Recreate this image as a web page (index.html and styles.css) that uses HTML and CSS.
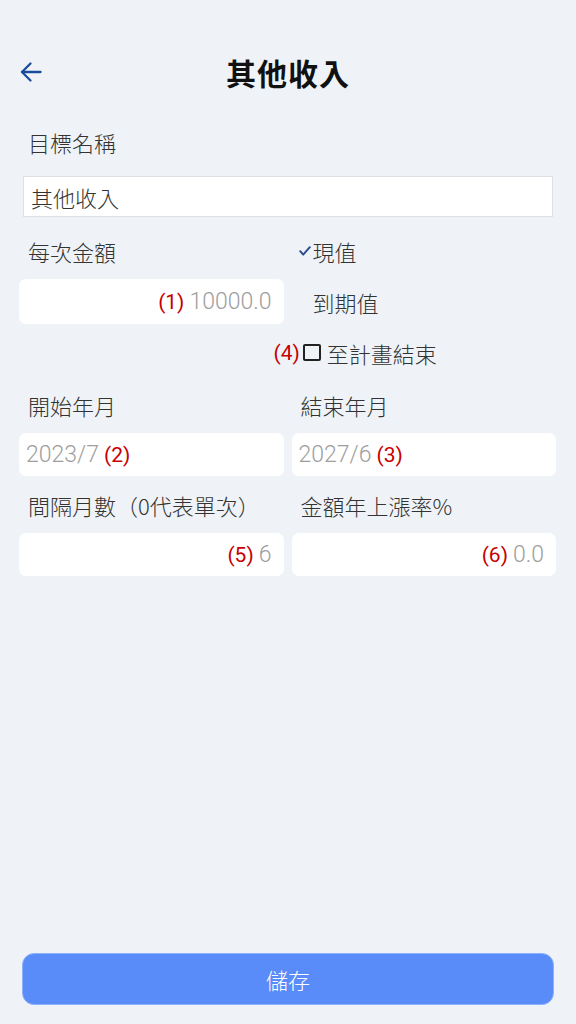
FILE: index.html
```html
<!DOCTYPE html>
<html lang="zh-TW">

<head>
  <meta charset="UTF-8">
  <title>其他收入</title>
  <meta name="viewport" content="width=device-width, initial-scale=1.0">
  <link rel="stylesheet" href="styles.css">
</head>

<body>
  <div class="page">
    <header class="top-bar">
      <button class="back-btn" aria-label="返回">
        <svg width="22" height="22" viewBox="0 0 22 22" fill="none" stroke="#1d4b9b" stroke-width="2.3" stroke-linecap="round" stroke-linejoin="round">
          <path d="M20.5 11H2" />
          <path d="M10.5 2.5L2 11l8.5 8.5" />
        </svg>
      </button>
      <h1>其他收入</h1>
      <span></span>
    </header>

    <!-- Goal name -->
    <section class="name-field">
      <div class="label">目標名稱</div>
      <div class="name-input">其他收入</div>
    </section>

    <!-- Amount + value type -->
    <section class="grid amount-row">
      <div class="field">
        <div class="label">每次金額</div>
        <div class="input right tall"><span class="note">(1)</span><span class="value">10000.0</span></div>
      </div>
      <div class="options">
        <div class="option">
          <span class="marker">
            <svg width="12" height="10" viewBox="0 0 12 10" fill="none" stroke="#2a4d8f" stroke-width="2" stroke-linecap="round" stroke-linejoin="round">
              <path d="M1.2 5.2l3 3.4L10.8 1.2" />
            </svg>
          </span>
          現值
        </div>
        <div class="option"><span class="marker"></span>到期值</div>
        <div class="option">
          <span class="note">(4)</span>
          <span class="checkbox"></span>
          <span class="option-text">至計畫結束</span>
        </div>
      </div>
    </section>

    <!-- Dates -->
    <section class="grid date-row">
      <div class="field">
        <div class="label">開始年月</div>
        <div class="input"><span class="value">2023/7</span><span class="note">(2)</span></div>
      </div>
      <div class="field">
        <div class="label">結束年月</div>
        <div class="input"><span class="value">2027/6</span><span class="note">(3)</span></div>
      </div>
    </section>

    <!-- Interval + growth -->
    <section class="grid interval-row">
      <div class="field">
        <div class="label">間隔月數（0代表單次）</div>
        <div class="input right"><span class="note">(5)</span><span class="value">6</span></div>
      </div>
      <div class="field">
        <div class="label">金額年上漲率%</div>
        <div class="input right"><span class="note">(6)</span><span class="value">0.0</span></div>
      </div>
    </section>

    <button class="save-btn">儲存</button>
  </div>
</body>

</html>
```

FILE: styles.css
```css
/* General Styles */
body {
  margin: 0;
  background-color: #eff3f7;
  font-family: Roboto, 'Noto Sans CJK TC', 'Noto Sans', sans-serif;
  font-weight: 300;
  color: #333;
  text-spacing-trim: space-all;
}

.page {
  min-height: 1024px;
  display: flex;
  flex-direction: column;
  box-sizing: border-box;
}

/* Header */
.top-bar {
  display: grid;
  grid-template-columns: 1fr auto 1fr;
  align-items: center;
  height: 48px;
  margin-top: 48px;
  padding: 0 20px;
}

.back-btn {
  background: none;
  border: none;
  padding: 0;
  width: 22px;
  height: 22px;
  display: flex;
  cursor: pointer;
}

.top-bar h1 {
  margin: 0;
  font-size: 30px;
  font-weight: 700;
  color: #111;
  letter-spacing: 1px;
}

/* Labels + inputs */
.label {
  height: 52px;
  box-sizing: border-box;
  padding: 0 0 4px 9px;
  display: flex;
  align-items: center;
  font-family: 'Noto Sans CJK TC', sans-serif;
  font-size: 22px;
  color: #333;
  white-space: nowrap;
}

.name-field {
  margin-top: 22px;
  padding: 0 23px 0 19px;
}

.name-field .label {
  margin-bottom: 6px;
}

.name-input {
  margin-left: 4px;
  height: 41px;
  box-sizing: border-box;
  border: 1px solid #dcdfe3;
  background: #ffffff;
  display: flex;
  align-items: center;
  padding-left: 7px;
  font-size: 22px;
  color: #333;
}

.grid {
  display: grid;
  grid-template-columns: 1fr 1fr;
  gap: 8px;
  padding: 0 20px 0 19px;
}

.amount-row {
  margin-top: 10px;
}

.date-row {
  margin-top: 3px;
}

.interval-row {
  margin-top: 5px;
}

.input {
  height: 43px;
  background: #ffffff;
  border-radius: 7px;
  display: flex;
  align-items: center;
  gap: 5px;
  padding: 0 12px 0 7px;
  font-size: 21px;
}

.input.tall {
  height: 45px;
}

.input.right {
  justify-content: flex-end;
}

.value {
  color: #9e9e9e;
  font-size: 23px;
}

.note {
  color: #c80000;
  font-weight: 400;
}

/* Value type options */
.options {
  margin: -2px 0 0 -18px;
  display: flex;
  flex-direction: column;
}

.option {
  height: 51px;
  display: flex;
  align-items: center;
  font-size: 22px;
  color: #333;
}

.option .note {
  font-size: 21px;
}

.marker {
  width: 39px;
  display: flex;
  justify-content: flex-end;
  padding-right: 2px;
  box-sizing: border-box;
}

.checkbox {
  width: 18px;
  height: 17px;
  box-sizing: border-box;
  border: 2.5px solid #222;
  border-radius: 2px;
  margin-left: 3px;
}

.option-text {
  margin-left: 6px;
}

/* Save button */
.save-btn {
  margin: auto 22px 19px;
  height: 52px;
  border: 1px solid #8fb0fb;
  border-radius: 12px;
  background-color: #5a8cf9;
  color: #ffffff;
  font-family: 'Noto Sans CJK TC', sans-serif;
  font-size: 22px;
  font-weight: 300;
  cursor: pointer;
}
```
